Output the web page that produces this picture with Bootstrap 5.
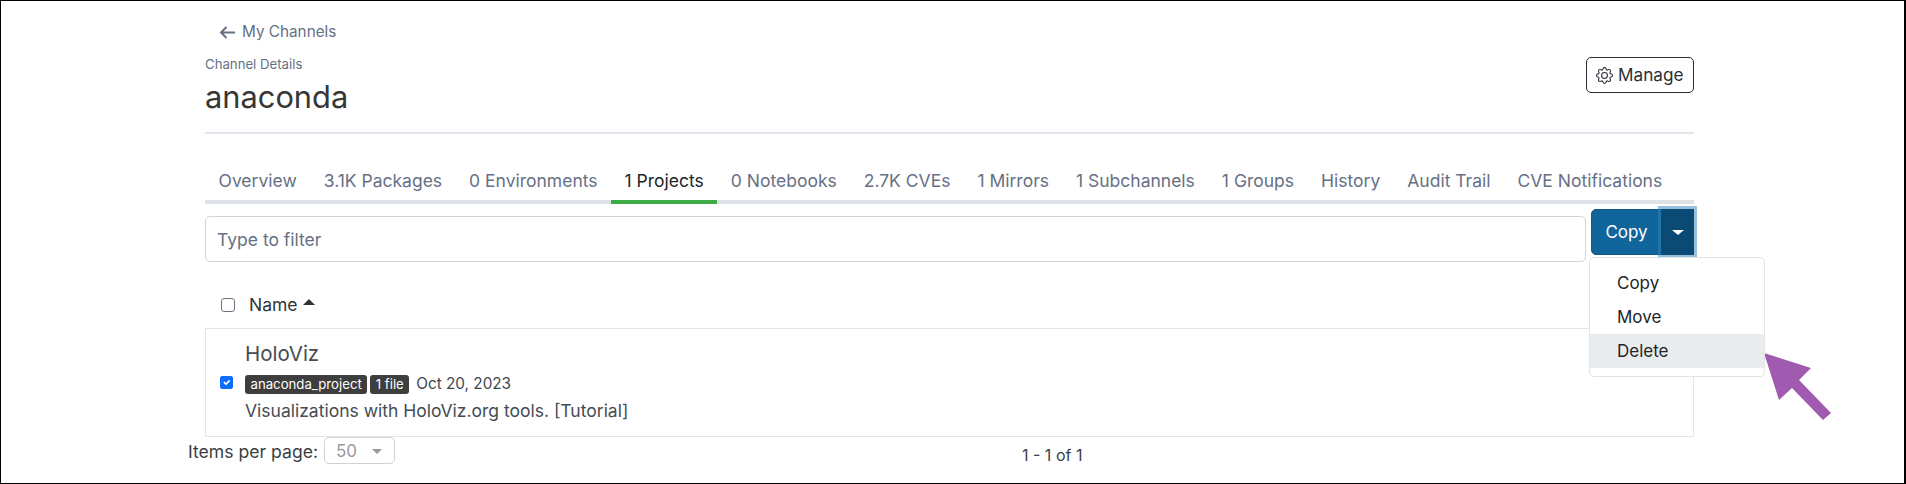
<!DOCTYPE html>
<html lang="en">
<head>
  <meta charset="UTF-8">
  <title>Channel Details</title>
  <link href="https://cdn.jsdelivr.net/npm/bootstrap@5.3.0/dist/css/bootstrap.min.css" rel="stylesheet">
  <style>
    body {
      font-family: "Inter", "Liberation Sans", sans-serif;
      background: #fff;
      overflow: hidden;
    }
    .shot-frame {
      width: 1906px;
      height: 484px;
      border: 1px solid #000;
      border-width: 1px 2px 1px 1px;
      position: relative;
      padding-left: 187px;
    }
    .page-area { width: 1523px; padding-left: 17px; }
    .back-link { color: #667085; font-size: 15.3px; width: fit-content; height: 40px; padding: 22px 0 0 14px; text-decoration: none; gap: 7px; }
    .head-row { width: 1489px; height: 93px; border-bottom: 2px solid #e3e6ec; }
    .head-label { font-size: 13.2px; color: #667085; line-height: 16px; margin-top: 15px; }
    .head-title { font-size: 30.8px; font-weight: 400; color: #363636; line-height: 36px; margin: 7px 0 0; }
    .manage-btn { font-size: 17.2px; color: #2b2f38; border: 1px solid #2b2f38; border-radius: 5px; padding: 0 9px; width: 108px; height: 36px; margin-top: 16px; background: #fff; gap: 5px; white-space: nowrap; }
    .tab-strip { width: 1489px; margin-top: 28px; border-bottom: 4px solid #dee1e6; height: 42px; }
    .tab-link { color: #667085; font-size: 17.5px; line-height: 26px; padding: 6px 13.5px 0; height: 42px; text-decoration: none; white-space: nowrap; border-bottom: 4px solid transparent; }
    .tab-link.is-current { color: #212529; border-bottom-color: #3eab49; }
    .filter-row { width: 1489px; position: relative; height: 60px; padding-top: 12px; }
    .filter-box { width: 1381px; height: 46px; font-size: 17.5px; color: #667085; border: 1px solid #ced4da; border-radius: 5px; padding: 0 11px; }
    .filter-box::placeholder { color: #667085; }
    .split-wrap { position: absolute; left: 1386px; top: 5px; }
    .split-main { width: 71px; height: 46px; background: #10659b; border: 1px solid #0d5888; color: #fff; font-size: 17px; border-radius: 5px 0 0 5px; padding: 1px 0 0; }
    .split-caret { width: 33px; height: 46px; background: #0a4a75; border: 1px solid #0a4a75; border-radius: 0 5px 5px 0; padding: 0; box-shadow: 0 0 0 3px rgba(49, 132, 190, .5); position: relative; }
    .split-caret::after { content: ""; display: inline-block; vertical-align: 3px; border-top: 5px solid #fff; border-left: 6px solid transparent; border-right: 6px solid transparent; }
    .action-menu { left: -2px; top: 48px; width: 176px; padding: 8px 0; font-size: 17px; border-radius: 5px; border-color: #e1e3e6; margin: 0; z-index: 5; --bs-dropdown-link-color: #212529; }
    .action-menu .dropdown-item { padding: 1px 27px 0; height: 34px; line-height: 33px; }
    .action-menu .dropdown-item.is-hover { background: #e9ecef; }
    .name-head { padding: 18px 0 0 16px; height: 64px; font-size: 17.5px; color: #2f343b; gap: 14px; }
    .name-head .form-check-input { width: 14px; height: 14px; margin: 0 0 1px; border-color: #6c757d; border-radius: 3px; }
    .sort-arrow { display: inline-block; border-bottom: 6px solid #2f343b; border-left: 6px solid transparent; border-right: 6px solid transparent; margin: 0 0 9px 5px; vertical-align: middle; }
    .name-text { padding-top: 1px; }
    .project-box { width: 1489px; height: 109px; border: 1px solid #e4e5e7; padding: 10px 0 0 14px; gap: 12px; }
    .project-box .form-check-input { width: 13px; height: 13px; margin: 37px 0 0; border-radius: 2px; background-color: #0d6efd; border-color: #0d6efd; flex: none; }
    .project-name { font-size: 20.5px; color: #454c54; line-height: 30px; }
    .project-meta { font-size: 15.3px; color: #3f454c; gap: 3px; line-height: 20px; margin-top: 5px; }
    .tag-dark { background: #3e3e3e; color: #fff; font-size: 13.2px; font-weight: 400; padding: 0 5.5px; height: 19px; line-height: 19px; border-radius: 3px; }
    .project-text { font-size: 17.5px; color: #454c54; line-height: 24px; margin-top: 5px; }
    .pager-row { height: 27px; margin-left: -17px; width: 1000px; position: relative; font-size: 17.6px; color: #3a3f46; }
    .per-page-label { padding-top: 3px; }
    .per-page-box { width: 71px; height: 27px; border: 1px solid #cfd2d6; border-radius: 5px; color: #999; font-size: 17px; margin-left: 6px; padding: 2px 12px 0 11px; gap: 15px; }
    .per-page-caret { border-top: 5px solid #999; border-left: 5px solid transparent; border-right: 5px solid transparent; }
    .pager-range { position: absolute; left: 834px; top: 6px; font-size: 16px; }
    .callout-arrow { position: absolute; left: 1763px; top: 352px; }
  </style>
</head>
<body>
  <div class="shot-frame">
    <div class="page-area">
      <a class="back-link d-flex align-items-center" href="#">
        <svg width="16" height="13" viewBox="0 0 16 13" fill="none" stroke="#667085" stroke-width="2"><path d="M16 6.5H2M7.5 1 2 6.5 7.5 12"/></svg>
        My Channels
      </a>
      <div class="head-row d-flex justify-content-between">
        <div>
          <div class="head-label">Channel Details</div>
          <h1 class="head-title">anaconda</h1>
        </div>
        <button class="manage-btn d-inline-flex align-items-center" type="button">
          <svg width="17" height="17" viewBox="0 0 16 16" fill="#2b2f38"><path d="M8 4.754a3.246 3.246 0 1 0 0 6.492 3.246 3.246 0 0 0 0-6.492zM5.754 8a2.246 2.246 0 1 1 4.492 0 2.246 2.246 0 0 1-4.492 0z"/><path d="M9.796 1.343c-.527-1.79-3.065-1.79-3.592 0l-.094.319a.873.873 0 0 1-1.255.52l-.292-.16c-1.64-.892-3.433.902-2.54 2.541l.159.292a.873.873 0 0 1-.52 1.255l-.319.094c-1.79.527-1.79 3.065 0 3.592l.319.094a.873.873 0 0 1 .52 1.255l-.16.292c-.892 1.64.901 3.434 2.541 2.54l.292-.159a.873.873 0 0 1 1.255.52l.094.319c.527 1.79 3.065 1.79 3.592 0l.094-.319a.873.873 0 0 1 1.255-.52l.292.16c1.64.893 3.434-.902 2.54-2.541l-.159-.292a.873.873 0 0 1 .52-1.255l.319-.094c1.79-.527 1.79-3.065 0-3.592l-.319-.094a.873.873 0 0 1-.52-1.255l.16-.292c.893-1.64-.902-3.433-2.541-2.54l-.292.159a.873.873 0 0 1-1.255-.52l-.094-.319zm-2.633.283c.246-.835 1.428-.835 1.674 0l.094.319a1.873 1.873 0 0 0 2.693 1.115l.291-.16c.764-.415 1.6.42 1.184 1.185l-.159.292a1.873 1.873 0 0 0 1.116 2.692l.318.094c.835.246.835 1.428 0 1.674l-.319.094a1.873 1.873 0 0 0-1.115 2.693l.16.291c.415.764-.42 1.6-1.185 1.184l-.291-.159a1.873 1.873 0 0 0-2.693 1.116l-.094.318c-.246.835-1.428.835-1.674 0l-.094-.319a1.873 1.873 0 0 0-2.692-1.115l-.292.16c-.764.415-1.6-.42-1.184-1.185l.159-.291A1.873 1.873 0 0 0 1.945 8.93l-.319-.094c-.835-.246-.835-1.428 0-1.674l.319-.094A1.873 1.873 0 0 0 3.06 4.377l-.16-.292c-.415-.764.42-1.6 1.185-1.184l.292.159a1.873 1.873 0 0 0 2.692-1.115l.094-.319z"/></svg>
          Manage
        </button>
      </div>
      <div class="tab-strip d-flex">
        <a class="tab-link" href="#">Overview</a>
        <a class="tab-link" href="#">3.1K Packages</a>
        <a class="tab-link" href="#">0 Environments</a>
        <a class="tab-link is-current" href="#">1 Projects</a>
        <a class="tab-link" href="#">0 Notebooks</a>
        <a class="tab-link" href="#">2.7K CVEs</a>
        <a class="tab-link" href="#">1 Mirrors</a>
        <a class="tab-link" href="#">1 Subchannels</a>
        <a class="tab-link" href="#">1 Groups</a>
        <a class="tab-link" href="#">History</a>
        <a class="tab-link" href="#">Audit Trail</a>
        <a class="tab-link" href="#">CVE Notifications</a>
      </div>
      <div class="filter-row">
        <input class="filter-box form-control" type="text" placeholder="Type to filter">
        <div class="split-wrap btn-group">
          <button class="btn split-main" type="button">Copy</button>
          <button class="btn split-caret" type="button" aria-label="More"></button>
          <ul class="dropdown-menu show action-menu">
            <li><a class="dropdown-item" href="#">Copy</a></li>
            <li><a class="dropdown-item" href="#">Move</a></li>
            <li><a class="dropdown-item is-hover" href="#">Delete</a></li>
          </ul>
        </div>
      </div>
      <div class="name-head d-flex align-items-center">
        <input class="form-check-input" type="checkbox" aria-label="Select all">
        <span class="name-text">Name<span class="sort-arrow"></span></span>
      </div>
      <div class="project-box d-flex">
        <input class="form-check-input" type="checkbox" checked aria-label="Select HoloViz">
        <div>
          <div class="project-name">HoloViz</div>
          <div class="project-meta d-flex align-items-center">
            <span class="tag-dark">anaconda_project</span>
            <span class="tag-dark">1 file</span>
            <span class="ms-1">Oct 20, 2023</span>
          </div>
          <div class="project-text">Visualizations with HoloViz.org tools. [Tutorial]</div>
        </div>
      </div>
      <div class="pager-row d-flex align-items-center">
        <span class="per-page-label">Items per page:</span>
        <div class="per-page-box d-flex align-items-center"><span>50</span><span class="per-page-caret"></span></div>
        <span class="pager-range">1 - 1 of 1</span>
      </div>
    </div>
    <svg class="callout-arrow" width="75" height="80" viewBox="0 0 75 80"><path fill="#a05ab0" d="M0 0 47 15 35 27 67 60 59 67 28 35 15 47Z"/></svg>
  </div>
  <script src="https://cdn.jsdelivr.net/npm/bootstrap@5.3.0/dist/js/bootstrap.bundle.min.js"></script>
</body>
</html>
